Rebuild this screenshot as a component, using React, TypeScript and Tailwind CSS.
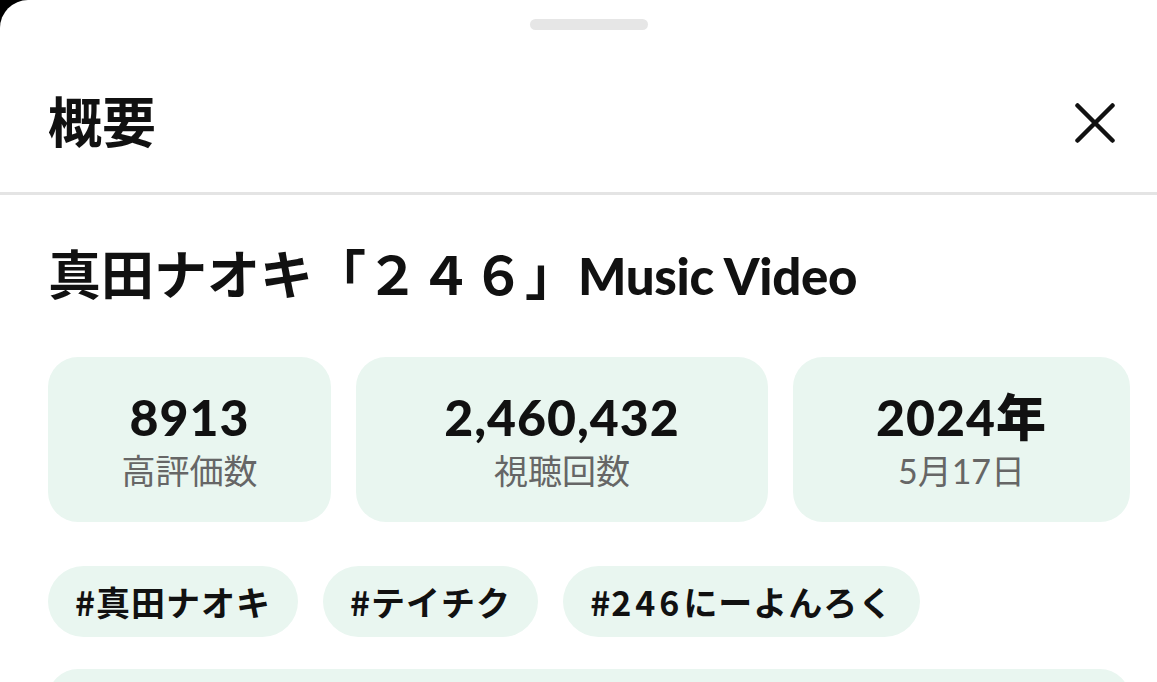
import React from "react";

const font = { fontFamily: '"Lato", "Noto Sans CJK JP", sans-serif' };
const cjk = { fontFamily: '"Noto Sans CJK JP", sans-serif' };

const stats = [
  { value: "8913", label: "高評価数", w: "w-[283px]" },
  { value: "2,460,432", label: "視聴回数", w: "w-[412px]" },
  { value: "2024年", label: "5月17日", w: "w-[337px]" },
];

const tags: React.ReactNode[] = [
  "#真田ナオキ",
  "#テイチク",
  <>
    #<span className="tracking-[4px]">246</span>にーよんろく
  </>,
];

export default function App() {
  return (
    <div className="w-[1157px] h-[682px] bg-black overflow-hidden" style={font}>
      <div className="h-full bg-white rounded-tl-[28px]">
        {/* drag handle */}
        <div className="pt-[19px] pl-[530px]">
          <div className="w-[118px] h-[11px] rounded-full bg-[#e6e6e6]" />
        </div>

        {/* header */}
        <div className="h-[165px] pt-[24px] flex items-center justify-between pl-[48px] pr-[42px] border-b-[3px] border-[#e4e4e4]">
          <h1 className="text-[54px] font-bold text-[#111] leading-none">概要</h1>
          <svg width="40" height="40" viewBox="0 0 40 40">
            <path d="M2.5 2.5 L37.5 37.5 M37.5 2.5 L2.5 37.5" stroke="#111" strokeWidth="4.5" strokeLinecap="round" />
          </svg>
        </div>

        <div className="pl-[48px] pr-[27px]">
          <h2 className="mt-[53px] text-[53px] font-bold text-[#111] leading-none">
            真田ナオキ「２４６」<span className="font-black text-[51px] tracking-[-0.3px]">Music Video</span>
          </h2>

          <div className="mt-[56px] flex gap-[25px]">
            {stats.map((s) => (
              <div
                key={s.label}
                className={`${s.w} shrink-0 h-[165px] rounded-[30px] bg-[#e9f6f0] flex flex-col items-center justify-center`}
              >
                <div className="text-[50px] font-black text-[#111] leading-none tracking-[1px]">{s.value}</div>
                <div className="mt-[12px] text-[34px] text-[#666] leading-none">{s.label}</div>
              </div>
            ))}
          </div>

          <div className="mt-[44px] flex gap-[25px]">
            {tags.map((t, i) => (
              <div
                key={i}
                className="h-[71px] px-[27px] rounded-full bg-[#e9f6f0] flex items-center text-[34px] font-bold text-[#111] leading-none tracking-[1px]"
                style={cjk}
              >
                {t}
              </div>
            ))}
          </div>

          <div className="mt-[32px] h-[120px] w-[1082px] rounded-[30px] bg-[#e9f6f0]" />
        </div>
      </div>
    </div>
  );
}
